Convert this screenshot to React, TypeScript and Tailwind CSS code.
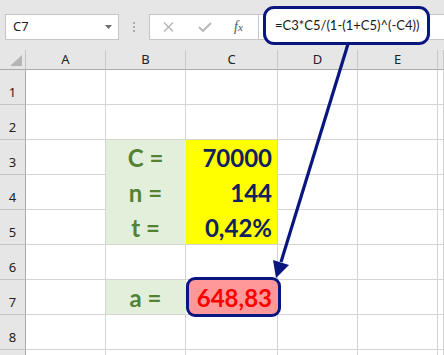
import React from 'react';

const cols = ['A', 'B', 'C', 'D', 'E', ''];
const rows = [1, 2, 3, 4, 5, 6, 7, 8, 9];

type Kind = 'label' | 'value';
type Cell = { text: string; kind: Kind; cls: string };

// filled cells hide their own gridlines, only the last one keeps the grey bottom line
const cells: Record<string, Cell> = {
  B3: { text: 'C =', kind: 'label', cls: 'border-r border-b border-r-[#e2efda] border-b-[#e2efda]' },
  B4: { text: 'n =', kind: 'label', cls: 'border-r border-b border-r-[#e2efda] border-b-[#e2efda]' },
  B5: { text: 't =', kind: 'label', cls: 'border-r border-b border-r-[#e2efda] border-b-[#d4d4d4]' },
  B7: { text: 'a =', kind: 'label', cls: 'border-r border-b border-r-[#e2efda] border-b-[#d4d4d4]' },
  C3: { text: '70000', kind: 'value', cls: 'border-r border-b border-r-[#d4d4d4] border-b-[#ffff00]' },
  C4: { text: '144', kind: 'value', cls: 'border-r border-b border-r-[#d4d4d4] border-b-[#ffff00]' },
  C5: { text: '0,42%', kind: 'value', cls: 'border-r border-b border-r-[#d4d4d4] border-b-[#d4d4d4]' },
};

const cellFont = { fontFamily: 'Lato, "Open Sans", sans-serif' };
const uiFont = { fontFamily: '"Noto Sans", "Open Sans", sans-serif' };

function GridCell({ id }: { id: string }) {
  const c = cells[id];

  if (id === 'C7') {
    return (
      <div className="relative border-r border-b border-[#d4d4d4] bg-white">
        <div
          className="absolute -top-[3px] left-0 -right-[4px] -bottom-[3px] z-10 flex items-end justify-end rounded-[9px] border-[3px] border-[#0a1680] bg-[#ff9999] pr-[6px] pb-[4px] text-[24px] font-bold leading-none text-[#ff0000]"
          style={cellFont}
        >
          648,83
        </div>
      </div>
    );
  }

  if (!c) return <div className="border-r border-b border-[#d4d4d4] bg-white" />;

  if (c.kind === 'label') {
    return (
      <div
        className={`flex items-end justify-center bg-[#e2efda] pb-[4px] text-[24px] font-bold leading-none text-[#548235] ${c.cls}`}
        style={cellFont}
      >
        {c.text}
      </div>
    );
  }

  return (
    <div
      className={`flex items-end justify-end bg-[#ffff00] pr-[5px] pb-[4px] text-[24px] font-bold leading-none text-[#102060] ${c.cls}`}
      style={cellFont}
    >
      {c.text}
    </div>
  );
}

function FormulaBar() {
  return (
    <div className="relative h-[50px] bg-[#e6e6e6]">
      <div className="flex items-start pt-[14px] pl-[5px]">
        {/* name box */}
        <div className="flex h-[26px] w-[114px] items-center justify-between border border-[#c6c6c6] bg-white pl-[7px] pr-[6px]">
          <span className="text-[13px] text-[#222]" style={uiFont}>C7</span>
          <svg width="7" height="4" viewBox="0 0 7 4">
            <polygon points="0,0 7,0 3.5,4" fill="#6f6f6f" />
          </svg>
        </div>

        <div className="flex h-[26px] w-[30px] flex-col items-center justify-center gap-[2px]">
          <span className="h-[2px] w-[2px] bg-[#ababab]" />
          <span className="h-[2px] w-[2px] bg-[#ababab]" />
          <span className="h-[2px] w-[2px] bg-[#ababab]" />
        </div>

        {/* cancel / enter / fx + formula field */}
        <div className="flex h-[26px] flex-1 border-y border-l border-[#c6c6c6] bg-white">
          <div className="flex w-[109px] items-center border-r border-[#c6c6c6]">
            <svg className="ml-[13px]" width="11" height="10" viewBox="0 0 11 10">
              <path d="M1 0.5 L10 9.5 M10 0.5 L1 9.5" stroke="#b3b3b3" strokeWidth="1.3" />
            </svg>
            <svg className="ml-[24px]" width="14" height="10" viewBox="0 0 14 10">
              <path d="M1 5 L5 9 L13 1" stroke="#b8b8b8" strokeWidth="2" fill="none" />
            </svg>
            <span
              className="ml-[22px] text-[14px] italic leading-none text-[#555]"
              style={{ fontFamily: '"Liberation Serif", serif' }}
            >
              f<span className="text-[11px]">x</span>
            </span>
          </div>
        </div>
      </div>

      {/* highlighted formula */}
      <div className="absolute left-[263px] top-[6px] z-10 flex h-[39px] w-[167px] items-center rounded-[11px] border-[3px] border-[#0a1680] bg-white pl-[9px]">
        <span className="whitespace-nowrap text-[13px] leading-none text-[#1a1a1a]" style={cellFont}>
          =C3*C5/(1-(1+C5)^(-C4))
        </span>
      </div>
    </div>
  );
}

export default function App() {
  return (
    <div className="relative h-[355px] w-[444px] overflow-hidden bg-white">
      <FormulaBar />

      <div className="grid grid-cols-[26px_80px_80px_92px_80px_80px_1fr] grid-rows-[20px_repeat(9,35px)]">
        {/* header row */}
        <div className="relative border-r border-b border-r-[#c4c4c4] border-b-[#ababab] bg-[#e6e6e6]">
          <svg className="absolute right-[3px] bottom-[3px]" width="12" height="11" viewBox="0 0 12 11">
            <polygon points="12,0 12,11 0,11" fill="#b5b5b5" />
          </svg>
        </div>
        {cols.map((c) => (
          <div
            key={c || 'F'}
            className="flex items-center justify-center border-r border-b border-r-[#c8c8c8] border-b-[#ababab] bg-[#e6e6e6] text-[13px] text-[#222]"
            style={uiFont}
          >
            {c}
          </div>
        ))}

        {rows.map((r) => (
          <React.Fragment key={r}>
            {/* row 9 only peeks in at the bottom edge, its number is out of view */}
            <div
              className="flex items-end justify-center border-r border-b border-r-[#ababab] border-b-[#c4c4c4] bg-[#e6e6e6] pb-[5px] text-[13px] leading-none text-[#222]"
              style={uiFont}
            >
              {r < 9 ? r : ''}
            </div>
            {cols.map((c) => (
              <GridCell key={c + r} id={(c || 'F') + r} />
            ))}
          </React.Fragment>
        ))}
      </div>

      {/* arrow from the formula to the result */}
      <svg className="pointer-events-none absolute left-0 top-0 z-20" width="444" height="355" viewBox="0 0 444 355">
        <line x1="348" y1="44" x2="281" y2="262" stroke="#0a1680" strokeWidth="3.2" />
        <polygon points="276,278 273,260 289,265" fill="#0a1680" />
      </svg>
    </div>
  );
}
